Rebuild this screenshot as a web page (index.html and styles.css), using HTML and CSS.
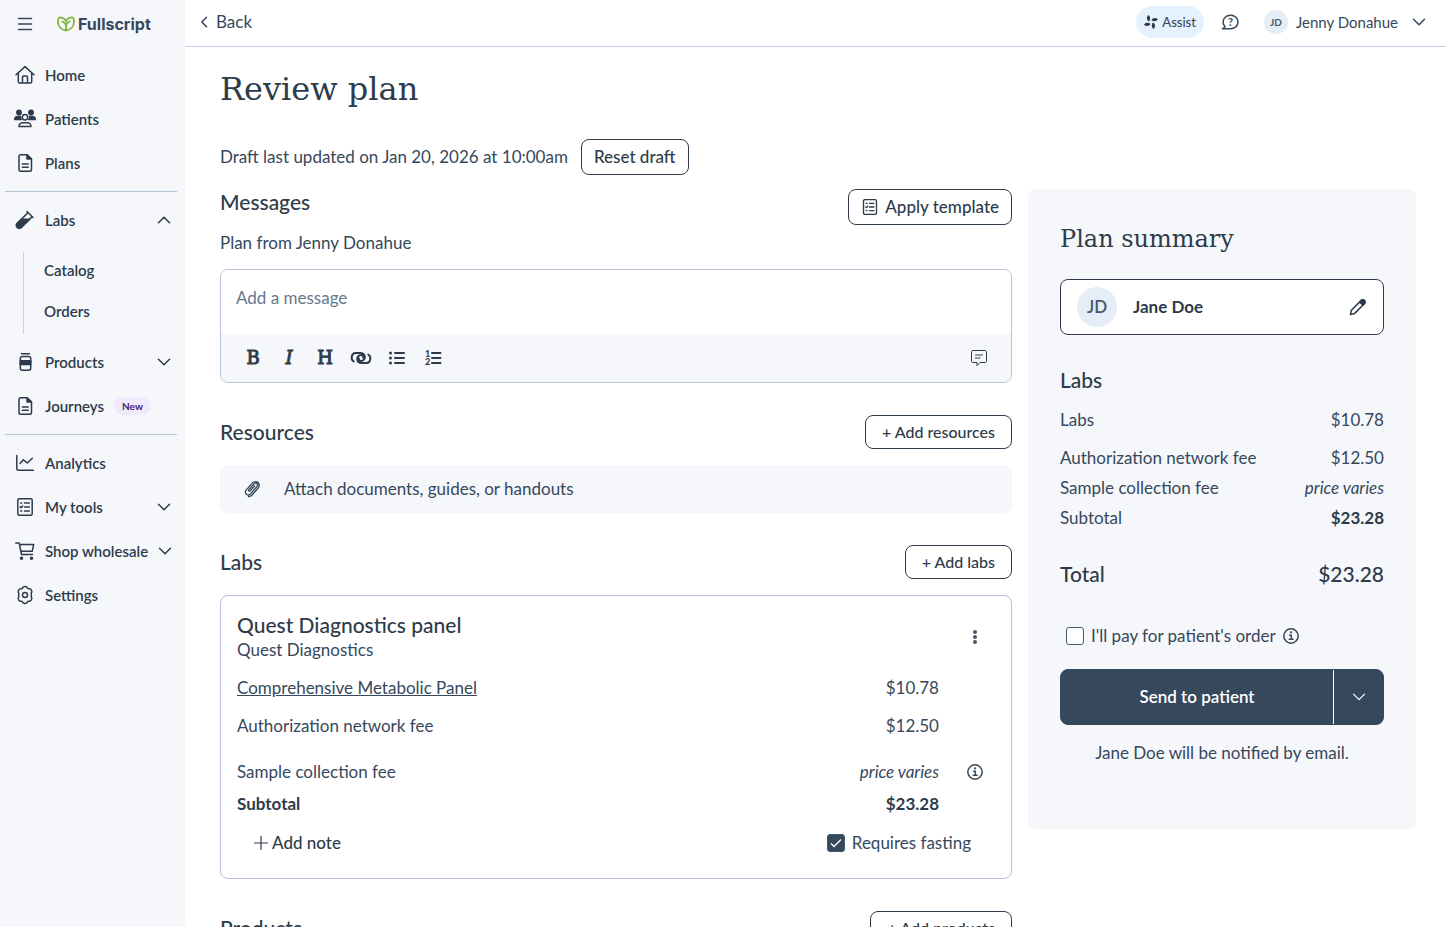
FILE: index.html
```html
<!DOCTYPE html>
<html lang="en">
<head>
    <meta charset="UTF-8">
    <meta name="viewport" content="width=device-width, initial-scale=1.0">
    <title>Review plan</title>
    <link rel="stylesheet" href="styles.css">
</head>
<body>

    <!-- shared icons -->
    <svg class="sprite" aria-hidden="true">
        <symbol id="chevron-down" viewBox="0 0 14 14">
            <path d="M1.5 4.2 7 9.7l5.5-5.5" />
        </symbol>
        <symbol id="document" viewBox="0 0 20 20">
            <path d="M5.5 1.8h6.5l4.500 4.200v10.700a1.5 1.5 0 0 1-1.5 1.5H5.500A1.5 1.5 0 0 1 4 16.700V3.300a1.5 1.5 0 0 1 1.5-1.5z" />
            <path class="solid" d="M12 1.800V6h4.500z" />
            <path d="M7.300 11h5.900M7.300 14.200h5.900" />
        </symbol>
        <symbol id="checklist" viewBox="0 0 20 20">
            <rect x="2.8" y="1.8" width="14.4" height="16.4" rx="1.5" />
            <path d="M9.5 6h4.8M9.5 10h4.8M9.5 14h4.8" />
            <path d="M5.7 6h1M5.3 9.900l.8.8 1.500-1.600M5.700 14h1" />
        </symbol>
        <symbol id="info" viewBox="0 0 18 18">
            <circle cx="9" cy="9" r="7.2" />
            <path d="M7.600 8.200h1.700v4M7.300 12.200h3.800" />
            <circle class="solid" cx="9" cy="5.400" r=".4" />
        </symbol>
    </svg>

    <div class="layout">
        <aside class="sidebar">
            <div class="brand">
                <button type="button" class="icon-btn" aria-label="Menu">
                    <svg class="icon" width="16" height="16" viewBox="0 0 16 16"><path d="M1.500 2.500h13M1.500 8h13M1.500 13.500h13" /></svg>
                </button>
                <a href="#" class="logo">
                    <svg width="18" height="16" viewBox="0 0 18 16">
                        <path d="M9 14.600C4.500 13.800 1 10.500 1 6c0-2 .4-4 1.300-4.500C3.600 .9 7.600 1.800 9 4.800c1.400-3 5.400-3.900 6.700-3.300C16.600 2 17 4 17 6c0 4.500-3.500 7.800-8 8.600z" />
                        <path d="M9 14.200V9.300M9 10.500C8.800 8 7 5.800 4.500 5.400M9 10.500c.2-2.500 2-4.700 4.500-5.100" />
                    </svg>
                    <span>Fullscript</span>
                </a>
            </div>

            <nav class="nav">
                <a href="#" class="nav-item">
                    <svg class="icon" width="20" height="20" viewBox="0 0 20 20"><path d="M1 9.700 10 1.600l9 8.100M3.300 8v8.500c0 .9.700 1.500 1.500 1.500h10.400c.8 0 1.500-.6 1.500-1.500V8M7.500 17.600V12c0-.6.400-1 1-1h3c.6 0 1 .4 1 1v5.600" /></svg>
                    <span>Home</span>
                </a>
                <a href="#" class="nav-item">
                    <svg class="icon icon-wide" width="22" height="20" viewBox="0 0 22 20">
                        <circle class="solid" cx="5" cy="3.5" r="2.2" /><circle class="solid" cx="17" cy="3.5" r="2.2" />
                        <path class="solid" d="M.7 10.500c0-2 1.300-3 3-3h2.800c-.2 1.300 0 2.200.7 3zM21.300 10.500c0-2-1.300-3-3-3h-2.800c.2 1.300 0 2.200-.7 3z" />
                        <circle cx="11" cy="8.300" r="2.700" />
                        <path d="M5 17.400c0-2.200 1.700-3.700 3.600-3.700h4.800c1.900 0 3.600 1.500 3.600 3.700z" />
                    </svg>
                    <span>Patients</span>
                </a>
                <a href="#" class="nav-item">
                    <svg class="icon" width="20" height="20"><use href="#document" /></svg>
                    <span>Plans</span>
                </a>

                <hr class="divider">

                <button type="button" class="nav-item" aria-expanded="true">
                    <svg class="icon" width="20" height="20" viewBox="0 0 20 20">
                        <path d="M12 1.500l6 6M13 2.600 2.300 13.300a2.800 2.800 0 0 0 4 4L17.200 6.600" />
                        <path class="solid" d="M6.500 9.200h8.200l-8.400 8.200a2.800 2.800 0 0 1-4-4z" />
                    </svg>
                    <span>Labs</span>
                    <svg class="icon chevron up" width="14" height="14"><use href="#chevron-down" /></svg>
                </button>
                <div class="subnav">
                    <a href="#">Catalog</a>
                    <a href="#">Orders</a>
                </div>
                <button type="button" class="nav-item">
                    <svg class="icon" width="20" height="20" viewBox="0 0 20 20">
                        <path d="M6.500 1.700h8" />
                        <rect x="5.300" y="4.500" width="10.400" height="13.700" rx="2" />
                        <path class="solid" d="M5.300 8.800h10.400v3.700H5.300z" />
                    </svg>
                    <span>Products</span>
                    <svg class="icon chevron" width="14" height="14"><use href="#chevron-down" /></svg>
                </button>
                <a href="#" class="nav-item">
                    <svg class="icon" width="20" height="20"><use href="#document" /></svg>
                    <span>Journeys</span>
                    <span class="badge">New</span>
                </a>

                <hr class="divider">

                <a href="#" class="nav-item">
                    <svg class="icon" width="20" height="20" viewBox="0 0 20 20"><path d="M1.800 2.500v13.200c0 .9.600 1.500 1.500 1.500h15M5 10.500l3.300-3.700 4 3.200 5-4.800" /></svg>
                    <span>Analytics</span>
                </a>
                <button type="button" class="nav-item">
                    <svg class="icon" width="20" height="20"><use href="#checklist" /></svg>
                    <span>My tools</span>
                    <svg class="icon chevron" width="14" height="14"><use href="#chevron-down" /></svg>
                </button>
                <button type="button" class="nav-item">
                    <svg class="icon" width="20" height="20" viewBox="0 0 20 20">
                        <path d="M.8 2h3.400l2.300 11.500h11M4.700 3.500h14l-1.500 6.800H6" />
                        <circle class="solid" cx="6.5" cy="17.300" r="1" /><circle class="solid" cx="16.5" cy="17.300" r="1" />
                    </svg>
                    <span>Shop wholesale</span>
                    <svg class="icon chevron" width="14" height="14"><use href="#chevron-down" /></svg>
                </button>
                <a href="#" class="nav-item">
                    <svg class="icon" width="20" height="20" viewBox="0 0 20 20">
                        <path d="M7.600 3.200C8 1 12 1 12.400 3.200L13.600 3.800C15.800 3 17.900 6.500 16.200 8.100L16.400 10 16.200 11.900C17.900 13.500 15.800 17 13.600 16.200L12.400 16.800C12 19 8 19 7.600 16.800L6.400 16.200C4.200 17 2.100 13.500 3.800 11.900L3.600 10 3.800 8.100C2.100 6.500 4.200 3 6.400 3.800z" />
                        <circle cx="10" cy="10" r="2.5" />
                    </svg>
                    <span>Settings</span>
                </a>
            </nav>
        </aside>

        <div class="page">
            <header class="topbar">
                <a href="#" class="back">
                    <svg class="icon" width="8" height="12" viewBox="0 0 8 12"><path d="M6.500 1.200 1.800 6l4.700 4.800" /></svg>
                    Back
                </a>
                <div class="topbar-right">
                    <button type="button" class="assist">
                        <svg width="14" height="14" viewBox="0 0 14 14">
                            <path d="M4.300 0C6.700 1.500 6.500 4.500 5.200 6.500 2.800 5.500 2 2.500 4.300 0zM14 4.300C12.500 6.700 9.500 6.500 7.500 5.200 8.500 2.800 11.500 2 14 4.300zM9.700 14C7.300 12.500 7.500 9.500 8.800 7.500c2.400 1 3.200 4 .9 6.500zM0 9.700C1.500 7.300 4.500 7.500 6.500 8.800 5.500 11.200 2.500 12 0 9.700z" />
                        </svg>
                        Assist
                    </button>
                    <button type="button" class="icon-btn" aria-label="Help">
                        <svg class="icon" width="18" height="18" viewBox="0 0 18 18">
                            <path d="M1.500 15.800h8c4.200 0 7.500-2.800 7.500-6.700s-3.200-6.800-7.500-6.800-7.400 3-7.400 6.600c0 2 .7 3.400 2 4.600-.4 1-1.300 1.700-2.600 2.300z" />
                            <text x="9.500" y="13" text-anchor="middle">?</text>
                        </svg>
                    </button>
                    <button type="button" class="account">
                        <span class="avatar">JD</span>
                        Jenny Donahue
                        <svg class="icon" width="14" height="14"><use href="#chevron-down" /></svg>
                    </button>
                </div>
            </header>

            <main class="content">
                <h1>Review plan</h1>
                <div class="draft">
                    <span>Draft last updated on Jan 20, 2026 at 10:00am</span>
                    <button type="button" class="btn">Reset draft</button>
                </div>

                <div class="columns">
                    <div class="plan">
                        <section class="messages">
                            <div class="messages-head">
                                <div>
                                    <h2>Messages</h2>
                                    <label for="message">Plan from Jenny Donahue</label>
                                </div>
                                <button type="button" class="btn">
                                    <svg class="icon" width="18" height="18"><use href="#checklist" /></svg>
                                    Apply template
                                </button>
                            </div>
                            <div class="editor">
                                <textarea id="message" rows="1" placeholder="Add a message"></textarea>
                                <div class="toolbar">
                                    <button type="button" aria-label="Bold">B</button>
                                    <button type="button" class="italic" aria-label="Italic">I</button>
                                    <button type="button" aria-label="Heading">H</button>
                                    <button type="button" aria-label="Link">
                                        <svg class="icon heavy" width="22" height="16" viewBox="0 0 22 16"><path d="M3.700 11.500C.3 9.300 1.300 3.200 5.500 3h5c4.500 0 5.500 5.200 2.700 7.300-2.200 1.600-4.900.2-4.500-2.100M18.300 4.500c3.400 2.200 2.400 8.300-1.800 8.500h-5C7 13 6 7.800 8.800 5.700c2.200-1.600 4.900-.2 4.500 2.100" /></svg>
                                    </button>
                                    <button type="button" aria-label="Bulleted list">
                                        <svg class="icon heavy" width="18" height="16" viewBox="0 0 18 16">
                                            <path d="M7 3h9M7 8h9M7 13h9" />
                                            <circle class="bullet" cx="2.500" cy="3" r="1.500" /><circle class="bullet" cx="2.500" cy="8" r="1.500" /><circle class="bullet" cx="2.500" cy="13" r="1.500" />
                                        </svg>
                                    </button>
                                    <button type="button" aria-label="Numbered list">
                                        <svg class="icon heavy" width="18" height="16" viewBox="0 0 18 16">
                                            <path d="M8 3h8.500M8 8h8.500M8 13h8.500" />
                                            <text x="1" y="6.500">1</text><text x="1" y="15">2</text>
                                        </svg>
                                    </button>
                                    <button type="button" class="snippets" aria-label="Saved messages">
                                        <svg class="icon thin" width="18" height="18" viewBox="0 0 18 18"><path d="M3 1.500h12c.8 0 1.500.7 1.500 1.500v9c0 .8-.7 1.500-1.500 1.500h-5L7 16.500v-3H3c-.8 0-1.500-.7-1.500-1.500V3c0-.8.7-1.500 1.500-1.500zM5.500 6h7M5.500 9h4.500" /></svg>
                                    </button>
                                </div>
                            </div>
                        </section>

                        <section>
                            <div class="section-head">
                                <h2>Resources</h2>
                                <button type="button" class="btn btn-add">+ Add resources</button>
                            </div>
                            <button type="button" class="attach">
                                <svg class="icon" width="18" height="18" viewBox="0 0 18 18"><path d="M11.600 6 7.300 10.900c-.9 1-2.300-.2-1.400-1.200L11 4c2-2.100 4.800.3 3 2.500l-6.200 7.100c-3 3.300-7.300-.4-4.500-3.700l6-6.800c2.600-2.700 6-1.300 6.800 1.200.4 1.500 0 2.700-1 3.900l-6 6.800c-1 1.100-2.400 1.700-3.700 1.500" /></svg>
                                Attach documents, guides, or handouts
                            </button>
                        </section>

                        <section>
                            <div class="section-head">
                                <h2>Labs</h2>
                                <button type="button" class="btn btn-add">+ Add labs</button>
                            </div>
                            <div class="card">
                                <div class="card-head">
                                    <div>
                                        <h3>Quest Diagnostics panel</h3>
                                        <p>Quest Diagnostics</p>
                                    </div>
                                    <button type="button" class="icon-btn" aria-label="More options">
                                        <svg class="dots" width="18" height="18" viewBox="0 0 18 18"><circle cx="9" cy="4" r="2" /><circle cx="9" cy="9" r="2" /><circle cx="9" cy="14" r="2" /></svg>
                                    </button>
                                </div>
                                <table class="prices">
                                    <tr>
                                        <td><a href="#">Comprehensive Metabolic Panel</a></td>
                                        <td class="amount">$10.78</td>
                                        <td class="extra"></td>
                                    </tr>
                                    <tr>
                                        <td>Authorization network fee</td>
                                        <td class="amount">$12.50</td>
                                        <td class="extra"></td>
                                    </tr>
                                    <tr class="collection">
                                        <td>Sample collection fee</td>
                                        <td class="amount"><em>price varies</em></td>
                                        <td class="extra">
                                            <button type="button" class="icon-btn" aria-label="About the collection fee"><svg class="icon" width="18" height="18"><use href="#info" /></svg></button>
                                        </td>
                                    </tr>
                                    <tr class="subtotal">
                                        <td>Subtotal</td>
                                        <td class="amount">$23.28</td>
                                        <td class="extra"></td>
                                    </tr>
                                </table>
                                <div class="card-foot">
                                    <button type="button" class="add-note">
                                        <svg class="icon" width="14" height="14" viewBox="0 0 14 14"><path d="M7 .5v13M.5 7h13" /></svg>
                                        Add note
                                    </button>
                                    <label class="check"><input type="checkbox" checked> Requires fasting</label>
                                </div>
                            </div>
                        </section>

                        <section>
                            <div class="section-head">
                                <h2>Products</h2>
                                <button type="button" class="btn btn-add">+ Add products</button>
                            </div>
                        </section>
                    </div>

                    <aside class="summary">
                        <h2 class="summary-title">Plan summary</h2>
                        <button type="button" class="patient">
                            <span class="avatar avatar-lg">JD</span>
                            Jane Doe
                            <svg class="icon" width="18" height="18" viewBox="0 0 18 18">
                                <path d="M1.500 16.500l.9-4.300L12 2.600c1-1.100 2.500-1.100 3.400-.1.900.9.900 2.300-.1 3.300L5.700 15.400z" />
                                <path class="solid" d="M10.600 4 12 2.600c1-1.100 2.500-1.100 3.400-.1.900.9.900 2.300-.1 3.300l-1.400 1.400z" />
                            </svg>
                        </button>
                        <h2>Labs</h2>
                        <table class="totals">
                            <tr class="labs-row"><td>Labs</td><td class="amount">$10.78</td></tr>
                            <tr><td>Authorization network fee</td><td class="amount">$12.50</td></tr>
                            <tr><td>Sample collection fee</td><td class="amount"><em>price varies</em></td></tr>
                            <tr><td>Subtotal</td><td class="amount"><strong>$23.28</strong></td></tr>
                        </table>
                        <div class="total">
                            <span>Total</span>
                            <span>$23.28</span>
                        </div>
                        <div class="pay">
                            <label class="check"><input type="checkbox"> I'll pay for patient's order</label>
                            <button type="button" class="icon-btn" aria-label="About paying for the order"><svg class="icon" width="18" height="18"><use href="#info" /></svg></button>
                        </div>
                        <div class="send">
                            <button type="button" class="send-main">Send to patient</button>
                            <button type="button" class="send-more" aria-label="More send options">
                                <svg class="icon" width="14" height="14"><use href="#chevron-down" /></svg>
                            </button>
                        </div>
                        <p class="notice">Jane Doe will be notified by email.</p>
                    </aside>
                </div>
            </main>
        </div>
    </div>

</body>
</html>
```

FILE: styles.css
```css
* {
    margin: 0;
    padding: 0;
    box-sizing: border-box;
}
body {
    font-family: Lato, sans-serif;
    font-size: 17px;
    line-height: 24px;
    color: #36485c;
    background-color: #fff;
}
button, input, textarea {
    font: inherit;
    color: inherit;
}
button {
    background: none;
    border: none;
    cursor: pointer;
}
a {
    color: inherit;
    text-decoration: none;
}
h1, .summary-title {
    font-family: "DejaVu Serif", serif;
    font-weight: 400;
    color: #2e3b4a;
}
h2, h3 {
    font-size: 21px;
    line-height: 26px;
    font-weight: 500;
    color: #2e3b4a;
}
.sprite {
    display: none;
}
.icon {
    flex-shrink: 0;
    fill: none;
    stroke: currentColor;
    stroke-width: 1.5;
    stroke-linecap: round;
    stroke-linejoin: round;
}
.icon text {
    fill: currentColor;
    stroke: none;
    font-weight: 700;
    font-size: 11px;
}
.heavy {
    stroke-width: 2;
}
.heavy text {
    font-family: Lato, sans-serif;
    font-size: 9px;
    font-weight: 900;
}
.thin {
    stroke-width: 1;
}
.solid {
    fill: currentColor;
}
.bullet {
    fill: currentColor;
    stroke: none;
}
.icon-btn {
    display: flex;
}

/* layout */
.layout {
    display: flex;
    height: 100vh;
    overflow: hidden;
}
.page {
    flex: 1;
    min-width: 0;
    display: flex;
    flex-direction: column;
}
.content {
    flex: 1;
    overflow-y: auto;
    scrollbar-width: none;
    padding: 20px 30px 32px 35px;
}

/* sidebar */
.sidebar {
    width: 185px;
    flex-shrink: 0;
    background-color: #f5f7fb;
    overflow-y: auto;
    scrollbar-width: none;
}
.brand {
    display: flex;
    align-items: center;
    gap: 24px;
    height: 47px;
    margin-bottom: 6px;
    padding-left: 17px;
}
.logo {
    display: flex;
    align-items: center;
    gap: 3px;
    font-family: Inter, sans-serif;
    font-size: 16px;
    font-weight: 700;
    color: #36485c;
}
.logo svg {
    fill: none;
    stroke: #80b341;
    stroke-width: 1.8;
}
.nav-item {
    display: flex;
    align-items: center;
    gap: 10px;
    width: 100%;
    height: 44px;
    padding: 0 14px 0 15px;
    font-size: 15px;
    font-weight: 600;
    color: #2e3b4a;
    white-space: nowrap;
}
.icon-wide {
    margin: 0 -1px;
}
.chevron {
    margin-left: auto;
}
.up {
    transform: rotate(180deg);
}
.divider {
    height: 1px;
    border: none;
    margin: 6px 8px 6px 5px;
    background-color: #b6c5d9;
}
.subnav {
    margin: 10px 0 6px 23px;
    padding-left: 20px;
    border-left: 1px solid #cbd3de;
}
.subnav a {
    display: block;
    height: 41px;
    line-height: 36px;
    font-size: 15px;
    font-weight: 600;
    color: #2e3b4a;
}
.badge {
    padding: 0 8px;
    border-radius: 9px;
    background-color: #f0e9fc;
    color: #42216e;
    font-size: 10px;
    line-height: 18px;
    font-weight: 700;
}

/* top bar */
.topbar {
    display: flex;
    justify-content: space-between;
    align-items: center;
    height: 47px;
    padding: 0 20px 2px 15px;
    border-bottom: 1px solid #c6cfe2;
}
.back {
    display: flex;
    align-items: center;
    gap: 8px;
}
.topbar-right {
    display: flex;
    align-items: center;
    gap: 17px;
}
.assist {
    display: flex;
    align-items: center;
    gap: 4px;
    height: 32px;
    padding: 0 8px;
    border-radius: 16px;
    background-color: #e5f2fd;
    font-size: 13px;
    font-weight: 500;
}
.assist svg {
    fill: #2e3b4a;
}
.account {
    display: flex;
    align-items: center;
    gap: 8px;
    margin-left: 8px;
    font-size: 15px;
}
.account .icon {
    margin-left: 6px;
}
.avatar {
    display: flex;
    align-items: center;
    justify-content: center;
    width: 24px;
    height: 24px;
    border-radius: 50%;
    background-color: #e5edf6;
    font-size: 10px;
    font-weight: 700;
    color: #46586e;
}
.avatar-lg {
    width: 40px;
    height: 40px;
    margin-right: 16px;
    font-size: 17px;
    font-weight: 600;
}

/* plan */
h1 {
    font-size: 32px;
    line-height: 44px;
}
.draft {
    display: flex;
    align-items: center;
    gap: 13px;
    margin: 28px 0 14px;
}
.btn {
    display: flex;
    align-items: center;
    gap: 6px;
    height: 36px;
    padding: 0 12px;
    border: 1px solid #2e3b4a;
    border-radius: 8px;
    background-color: #fff;
    font-weight: 500;
    color: #2e3b4a;
    white-space: nowrap;
}
.btn-add {
    height: 34px;
    padding: 0 16px;
    font-size: 16px;
}
.columns {
    display: grid;
    grid-template-columns: minmax(0, 792fr) minmax(0, 388fr);
    gap: 16px;
    align-items: start;
}
.plan section {
    margin-bottom: 32px;
}
.messages-head {
    display: flex;
    justify-content: space-between;
    align-items: flex-start;
    margin-bottom: 14px;
}
.messages-head label {
    display: block;
    margin-top: 16px;
}
.editor {
    border: 1px solid #b6c5d9;
    border-radius: 8px;
    overflow: hidden;
}
.editor textarea {
    display: block;
    width: 100%;
    height: 64px;
    padding: 16px 15px;
    border: none;
    outline: none;
    resize: none;
}
.editor textarea::placeholder {
    color: #66788e;
}
.toolbar {
    display: flex;
    align-items: center;
    height: 48px;
    padding: 0 14px;
    background-color: #f5f7fb;
}
.toolbar button {
    display: flex;
    align-items: center;
    justify-content: center;
    width: 36px;
    height: 36px;
    font-family: "DejaVu Serif", serif;
    font-size: 18px;
    color: #2e3b4a;
    -webkit-text-stroke: 1px #2e3b4a;
}
.toolbar svg {
    -webkit-text-stroke: 0;
}
.toolbar .italic {
    font-style: italic;
}
.toolbar .snippets {
    margin-left: auto;
}
.section-head {
    display: flex;
    justify-content: space-between;
    align-items: center;
    margin-bottom: 16px;
}
.attach {
    display: flex;
    align-items: center;
    gap: 23px;
    width: 100%;
    height: 48px;
    padding: 0 23px;
    border-radius: 8px;
    background-color: #f5f7fb;
}
.attach .icon {
    stroke-width: 1.3;
}

/* lab card */
.card {
    padding: 16px 16px 23px;
    border: 1px solid #b6c5d9;
    border-radius: 8px;
}
.card-head {
    display: flex;
    justify-content: space-between;
    align-items: center;
    padding-right: 11px;
    margin-bottom: 7px;
}
.dots {
    fill: #46586e;
}
.prices, .totals {
    width: 100%;
    border-collapse: collapse;
}
.prices td {
    height: 38px;
}
.prices a {
    text-decoration: underline;
}
.prices .collection td {
    height: 46px;
    padding-top: 8px;
}
.prices .subtotal td {
    height: 26px;
    font-weight: 700;
    color: #2e3b4a;
}
.amount {
    text-align: right;
}
.extra {
    width: 56px;
    padding-left: 27px;
}
.card-foot {
    display: flex;
    justify-content: space-between;
    align-items: center;
    margin-top: 14px;
    padding: 0 24px 0 17px;
}
.add-note {
    display: flex;
    align-items: center;
    gap: 4px;
    font-weight: 500;
    color: #2e3b4a;
}
.add-note .icon {
    stroke-width: 1.2;
}
.check {
    display: flex;
    align-items: center;
    gap: 7px;
}
.check input {
    appearance: none;
    width: 18px;
    height: 18px;
    border: 1px solid #46586e;
    border-radius: 3px;
    background-color: #fff;
}
.check input:checked {
    background: #36485c url("data:image/svg+xml,%3Csvg xmlns='http://www.w3.org/2000/svg' viewBox='0 0 16 16'%3E%3Cpath d='M3 8.500l3 3 7-7' fill='none' stroke='white' stroke-width='1.300'/%3E%3C/svg%3E") center no-repeat;
}

/* summary */
.summary {
    padding: 32px 32px 64px;
    border-radius: 8px;
    background-color: #f5f7fb;
}
.summary-title {
    margin-bottom: 22px;
    font-size: 24px;
    line-height: 36px;
}
.patient {
    display: flex;
    align-items: center;
    width: 100%;
    height: 56px;
    margin-bottom: 32px;
    padding: 0 16px;
    border: 1px solid #2e3b4a;
    border-radius: 8px;
    background-color: #fff;
    font-weight: 700;
    color: #2e3b4a;
}
.patient .icon {
    margin-left: auto;
}
.totals {
    margin: 12px 0 26px;
}
.totals td {
    height: 30px;
}
.totals .labs-row td {
    height: 38px;
    padding-bottom: 8px;
}
.totals strong {
    color: #2e3b4a;
}
.total {
    display: flex;
    justify-content: space-between;
    font-size: 21px;
    line-height: 30px;
    font-weight: 500;
    color: #2e3b4a;
}
.pay {
    display: flex;
    align-items: center;
    gap: 6px;
    margin: 35px 0 21px 6px;
}
.send {
    display: flex;
    height: 56px;
    border: 1px solid #36485c;
    border-radius: 8px;
    background-color: #36485c;
    color: #fff;
    font-weight: 600;
}
.send-main {
    flex: 1;
}
.send-more {
    display: flex;
    align-items: center;
    justify-content: center;
    width: 50px;
    border-left: 1px solid #fff;
}
.send .icon {
    stroke-width: 1.2;
}
.notice {
    margin-top: 16px;
    text-align: center;
}
```
